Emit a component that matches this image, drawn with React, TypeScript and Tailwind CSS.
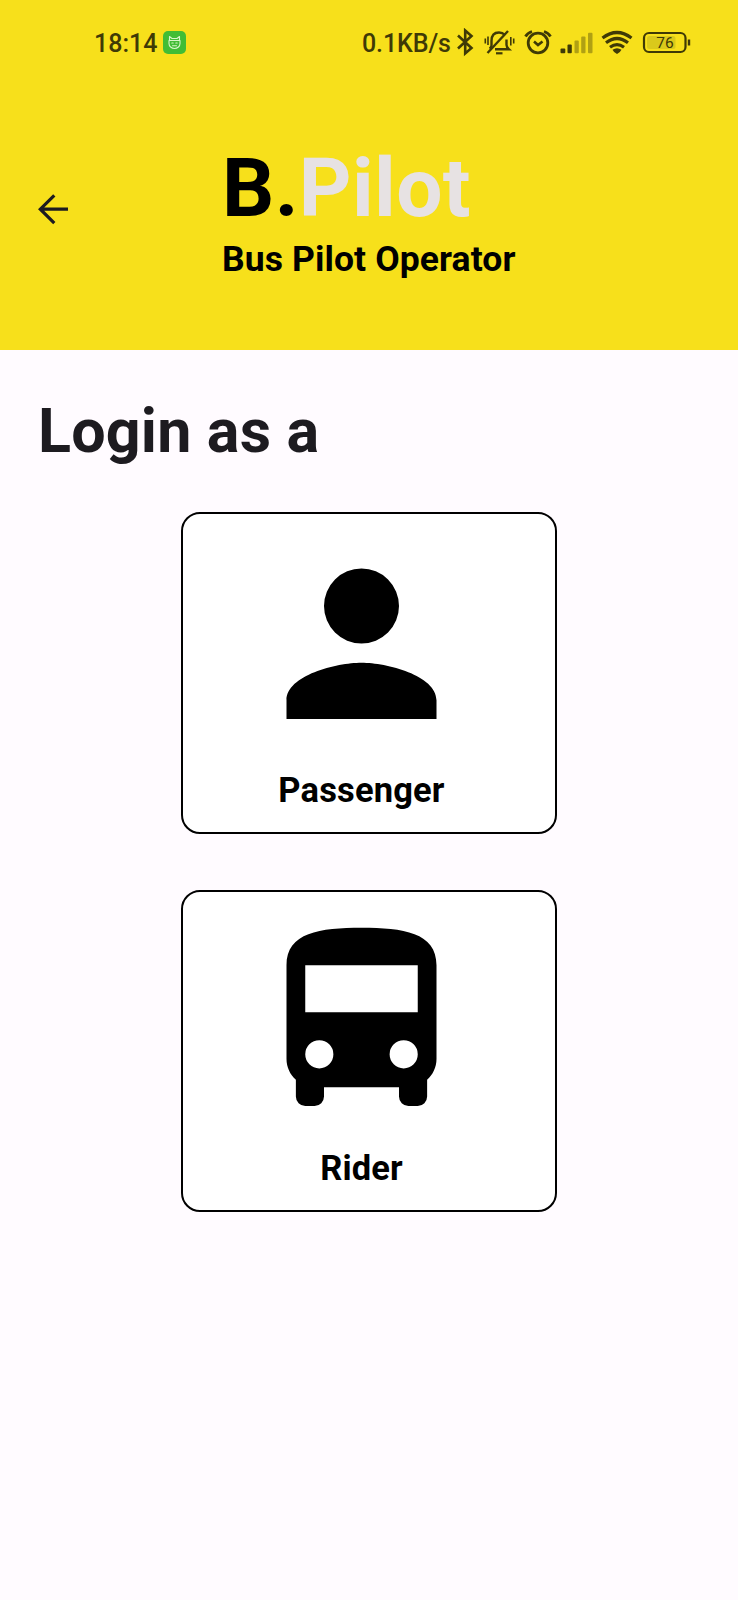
import React from "react";

function StatusBar() {
  return (
    <div className="flex h-[84px] items-start pt-[29px] text-[#3f3a06]">
      <div className="ml-[94px] w-[66px] whitespace-nowrap text-[25px] font-medium leading-[30px]">18:14</div>
      <svg className="-mt-px ml-[2px]" width="25" height="30" viewBox="162 28 25 30">
        <rect x="163" y="31" width="23" height="23" rx="5" fill="#41bd35" />
        <g fill="none" stroke="#d8f5c8" strokeWidth="1.1" strokeLinecap="round" strokeLinejoin="round">
          <path d="M169.500 40.500V36.500l2.500 2h5l2.500-2v4" />
          <path d="M169 40.500h11v3a5.500 5 0 0 1-11 0z" />
          <path d="M171.800 43h1.400M175.800 43h1.400M172.500 45.800h4" />
        </g>
      </svg>
      <div className="ml-[175px] w-[93px] whitespace-nowrap text-[25px] font-medium leading-[30px] tracking-[-0.1px]">0.1KB/s</div>
      <svg className="-mt-px" width="240" height="30" viewBox="454 28 240 30" fill="none" stroke="currentColor">
        <path d="M457 35.500l13.500 12.500-6.300 5.500V30.500l6.300 5.500-13.500 12.500" strokeWidth="2.600" strokeLinejoin="miter" />
        <g strokeWidth="2.400" strokeLinecap="butt">
          <path d="M488.500 48.500q2-1 2-3V41c0-5 2.500-8.500 7.500-8.500 2.500 0 4.500 1 6 2.500M505.500 39.500V45q0 2 2.500 4.300H494" />
          <path d="M486.500 53L507 31" />
          <path d="M495 53.300h6.500" strokeWidth="2.200" />
          <path d="M484.300 38.500v5M487 36.500v8.500M509.800 37v8.500M512.700 38.500v5" strokeWidth="1.600" />
        </g>
        <circle cx="537" cy="43" r="9.800" strokeWidth="2.800" />
        <path d="M533 41.500l4 3.500 4.500-3.500" strokeWidth="2.600" />
        <path d="M524.500 36.500q2-3.500 6.500-5M549.500 36.500q-2-3.500-6.500-5" strokeWidth="2.800" />
        <g stroke="none" fill="currentColor">
          <rect x="559.500" y="48.500" width="4.800" height="4.800" rx="1" />
          <rect x="566.500" y="44.500" width="4.300" height="8.800" rx="1" />
          <g fill="#b0a013">
            <rect x="573.500" y="40.500" width="4.300" height="12.800" rx="1" />
            <rect x="580.200" y="36.500" width="4.300" height="16.800" rx="1" />
            <rect x="587" y="32.800" width="4.500" height="20.500" rx="1" />
          </g>
          <path d="M611.500 49.800q4.500-3.200 9 0q-1.300 2.800-4.500 4.200q-3.200-1.400-4.500-4.200z" />
        </g>
        <path d="M601.500 38q14.500-11 29 0M605 42.800q11-8.600 22 0M609 47.200q7-5.200 14 0" strokeWidth="3.200" />
        <rect x="643" y="33" width="41.500" height="19" rx="5" strokeWidth="2.200" />
        <rect x="646" y="36" width="28.500" height="13" rx="2.500" fill="#dac91b" stroke="none" />
        <path d="M688 39.500v6" strokeWidth="2.400" />
        <text x="664" y="48.200" textAnchor="middle" fontSize="15.500" fill="currentColor" stroke="none">76</text>
      </svg>
    </div>
  );
}

function Header() {
  return (
    <header className="h-[350px] bg-[#f7e01b]">
      <StatusBar />
      <div className="flex">
        <button className="ml-[33px] mt-[105px] size-[40px]" aria-label="Back">
          <svg width="40" height="40" viewBox="33 189 40 40" fill="none" stroke="#1d1b20" strokeWidth="3.200">
            <path d="M68 209.200H40M54.300 195.300L40.300 209.200l14 13.900" />
          </svg>
        </button>
        <div className="ml-[149px] mt-[55px] whitespace-nowrap">
          <div className="text-[82px] font-bold leading-[98px] tracking-[0.35px] text-black">
            B.<span className="text-[#e7e2e3]">Pilot</span>
          </div>
          <div className="mt-px text-[35.5px] font-bold leading-[42px] tracking-[0.1px] text-black">Bus Pilot Operator</div>
        </div>
      </div>
    </header>
  );
}

function RoleCard({ label, children }: { label: string; children: React.ReactNode }) {
  return (
    <button className="flex h-[322px] w-[376px] flex-col items-center rounded-[19px] border-2 border-black bg-white pr-[15px] pt-[17px]">
      <svg className="-ml-px" width="225" height="225" viewBox="0 0 24 24" fill="black">
        {children}
      </svg>
      <span className="mt-[14px] text-[34.500px] font-bold leading-[40px] tracking-[0.15px] text-black">{label}</span>
    </button>
  );
}

export default function App() {
  return (
    <div className="h-[1600px] w-[738px] overflow-hidden bg-[#fffbff] font-['Roboto',sans-serif]">
      <Header />
      <main>
        <h1 className="ml-[38px] mt-[45px] text-[61px] font-bold leading-[72px] tracking-[0.18px] text-[#1d1b20]">Login as a</h1>
        <div className="ml-[181px] mt-[45px] flex flex-col gap-[56px]">
          <RoleCard label="Passenger">
            <path d="M12 4a4 4 0 1 1 0 8 4 4 0 0 1 0-8M12 14.050c-2.670 0-8 1.340-8 4v2h16v-2c0-2.660-5.330-4-8-4z" />
          </RoleCard>
          <RoleCard label="Rider">
            <path d="M18 11H6V6h12M16.500 17a1.500 1.500 0 1 1 0-3 1.500 1.500 0 0 1 0 3m-9 0a1.500 1.500 0 1 1 0-3 1.500 1.500 0 0 1 0 3M4 16c0 .88.39 1.670 1 2.220V20a1 1 0 0 0 1 1h1a1 1 0 0 0 1-1v-1h8v1a1 1 0 0 0 1 1h1a1 1 0 0 0 1-1v-1.780c.61-.55 1-1.340 1-2.220V6c0-3.500-3.580-4-8-4s-8 .5-8 4v10z" fillRule="evenodd" />
          </RoleCard>
        </div>
      </main>
    </div>
  );
}
